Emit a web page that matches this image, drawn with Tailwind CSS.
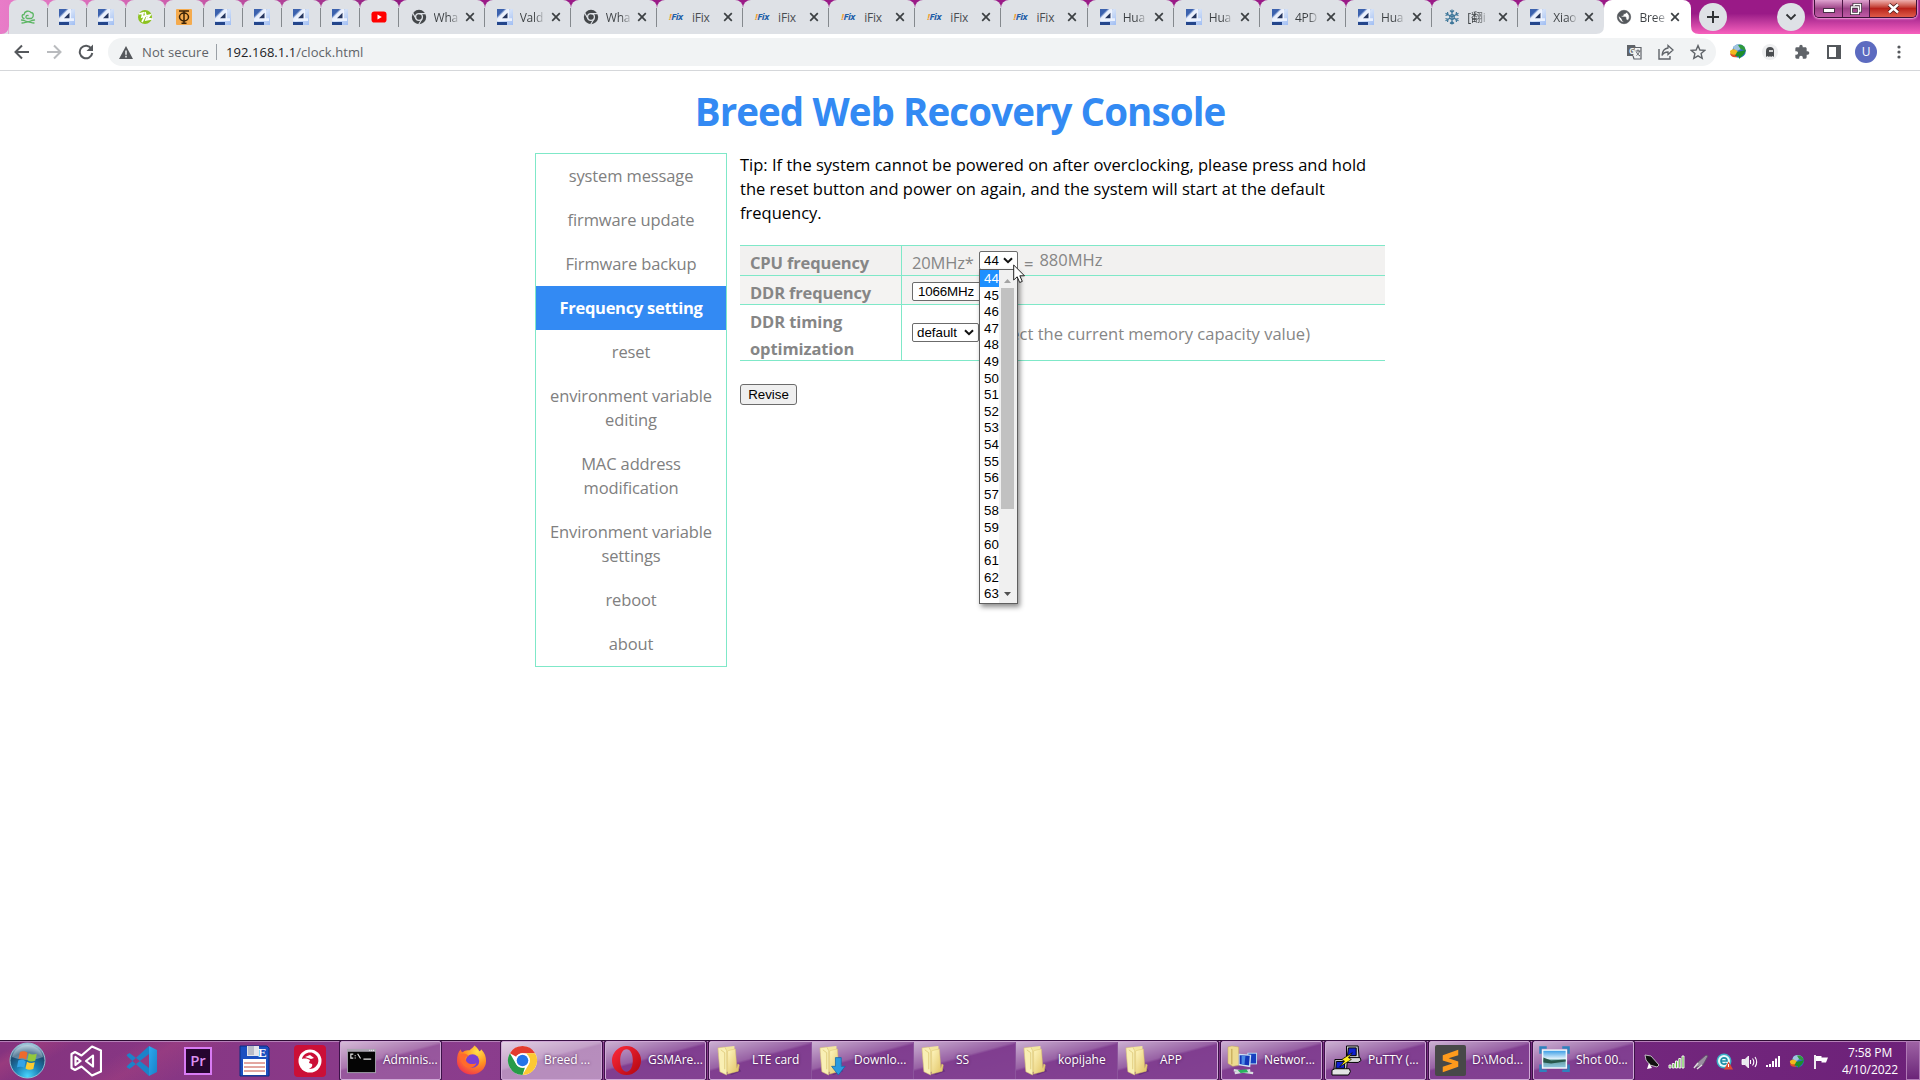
<!DOCTYPE html>
<html lang="en">
<head>
<meta charset="utf-8">
<title>Breed Web Recovery Console</title>
<script src="https://cdn.jsdelivr.net/npm/@tailwindcss/browser@4"></script>
</head>
<body class="w-[1920px] h-[1080px] overflow-hidden bg-white flex flex-col font-['Open_Sans','Noto_Sans','Noto_Sans_CJK_SC',sans-serif]">

<svg width="0" height="0" class="absolute">
  <defs>
    <linearGradient id="g4" x1="0" y1="0" x2="1" y2="1"><stop offset="0" stop-color="#2f55a4"/><stop offset=".45" stop-color="#d5e2f8"/><stop offset="1" stop-color="#9fbdf3"/></linearGradient>
    <linearGradient id="gFolder" x1="0" y1="0" x2="1" y2="1"><stop offset="0" stop-color="#fff6c0"/><stop offset="1" stop-color="#dfc05e"/></linearGradient>
    <linearGradient id="gCode" x1="0" y1="0" x2="1" y2="1"><stop offset="0" stop-color="#2ba9f0"/><stop offset="1" stop-color="#1b80c8"/></linearGradient>
    <radialGradient id="gOrb" cx=".5" cy=".95" r=".9"><stop offset="0" stop-color="#48d6ff"/><stop offset=".4" stop-color="#1c7fb4"/><stop offset=".75" stop-color="#1b4a70"/><stop offset="1" stop-color="#9fc4d8"/></radialGradient>
    <radialGradient id="gFox" cx=".7" cy=".2" r=".9"><stop offset="0" stop-color="#ffe14a"/><stop offset=".5" stop-color="#ff9020"/><stop offset="1" stop-color="#f0304f"/></radialGradient>
    <linearGradient id="gOpera" x1="0" y1="0" x2="1" y2="1"><stop offset="0" stop-color="#ff2a3c"/><stop offset="1" stop-color="#b0060f"/></linearGradient>
    <linearGradient id="gSky" x1="0" y1="0" x2="0" y2="1"><stop offset="0" stop-color="#3f9fe6"/><stop offset=".5" stop-color="#e6f4fb"/><stop offset=".55" stop-color="#5f9a9a"/><stop offset="1" stop-color="#8cc4dd"/></linearGradient>
  </defs>
  <symbol id="i-4" viewBox="0 0 16 16"><rect width="16" height="16" fill="url(#g4)"/><path d="M0 0h8L0 8z" fill="#3c62ae"/><path d="M0 9.500L9.500 0H12v9.200h3V12H0z" fill="#f3f7ff" opacity=".85"/><path d="M10.500 3.800v5.400H5z" fill="#26365f"/><path d="M0 13h10v3H0z" fill="#24468c"/></symbol>
  <symbol id="i-cloud" viewBox="0 0 16 16"><g fill="none" stroke="#5cb664" stroke-width="1.300" stroke-linecap="round"><path d="M4 9.500C1.500 9 1.500 5.500 4 5.500 4.500 2 9 1 11 3.500c2.500 0 3.500 4 .5 6H7C5 8.500 6 6 8 6.500M1.500 11c3 0 4.500 1.700 6.500 1.700s3.500-1.700 6.500-1.700M2 14c2.500 0 4-1.200 6-1.200s3.500 1.200 6 1.200"/></g></symbol>
  <symbol id="i-green" viewBox="0 0 16 16"><circle cx="8" cy="8" r="7" fill="#8cc21e"/><path d="M2 5l4-1-1 4 3-1-3 6M8 3l1 4 4-1-2 3 3 1-5 1 1-3" fill="none" stroke="#fff" stroke-width="1.700"/></symbol>
  <symbol id="i-phi" viewBox="0 0 16 16"><rect width="16" height="16" rx="1" fill="#f5ab4e"/><g fill="none" stroke="#3c2408" stroke-width="1.500"><path d="M3 2h10M8 2v12.500M5.500 14.200h5"/><ellipse cx="8" cy="8" rx="4.500" ry="3.900"/></g></symbol>
  <symbol id="i-yt" viewBox="0 0 16 16"><rect x=".5" y="2.500" width="15" height="11" rx="2.800" fill="#f00"/><path d="M6.500 5.500v5L10.800 8z" fill="#fff"/></symbol>
  <symbol id="i-chromegray" viewBox="0 0 16 16"><circle cx="8" cy="8" r="7.200" fill="#44474a"/><circle cx="8" cy="8" r="3.400" fill="none" stroke="#dee1e6" stroke-width="1.300"/><path d="M8 4.600h7M5 9.700L1.600 3.800M11 9.700l-3.500 6" stroke="#dee1e6" stroke-width="1.200"/></symbol>
  <symbol id="i-snow" viewBox="0 0 16 16"><g fill="none" stroke="#3d7699" stroke-width="1.200"><path d="M8 .5v15M1.500 4.200l13 7.600M1.500 11.800l13-7.600M6 1.500l2 2 2-2M6 14.500l2-2 2 2M1.500 6.500L4 5.700 3.500 3M14.500 9.500l-2.500.8.500 2.700M1.500 9.500l2.500.8L3.500 13M14.500 6.500L12 5.700l.5-2.700"/><circle cx="8" cy="8" r="2.300"/></g></symbol>
  <symbol id="i-globe" viewBox="0 0 24 24"><path d="M12 2C6.500 2 2 6.500 2 12s4.500 10 10 10 10-4.500 10-10S17.500 2 12 2zm-1 17.900C7.100 19.400 4 16.100 4 12c0-.6.100-1.200.200-1.800L9 15v1c0 1.100.9 2 2 2v1.900zm6.900-2.500c-.3-.8-1-1.400-1.900-1.400h-1v-3c0-.6-.4-1-1-1H8v-2h2c.6 0 1-.4 1-1V7h2c1.100 0 2-.9 2-2v-.4c2.900 1.200 5 4.100 5 7.400 0 2.100-.8 4-2.100 5.400z" fill="#54585c" stroke="#54585c"/></symbol>
  <symbol id="i-x" viewBox="0 0 10 10"><path d="M1.200 1.200l7.600 7.600M8.800 1.200L1.200 8.800" stroke="#3c4043" stroke-width="1.700" fill="none"/></symbol>
  <symbol id="i-folder" viewBox="0 0 32 32"><path d="M11 28l12-5 3 4-10 4z" fill="#3c1458" opacity=".35"/><path d="M9 2l10-1 1 25-11 2z" fill="#f3e6a0"/><path d="M12 6l8-2 1.500 20 1-4.500 1.500 1-1 6.500-11 3z" fill="url(#gFolder)" stroke="#d9c06c" stroke-width=".5"/><path d="M2 3l7-1 2 4v25l-7-3.500z" fill="#f9efb4" stroke="#d8c377" stroke-width=".6"/><path d="M5 5l4 3v17" fill="none" stroke="#d0b860" stroke-width=".6"/></symbol>
  <symbol id="i-dlfolder" viewBox="0 0 32 32"><use href="#i-folder" width="32" height="32"/><path d="M18 13h6v9h4l-7 9-7-9h4z" fill="#2a9be0" stroke="#1569a8" stroke-width=".8"/></symbol>
  <symbol id="i-cmd" viewBox="0 0 32 32"><rect x="1" y="4" width="30" height="25" fill="#a9a4b0"/><rect x="2" y="7" width="28" height="21" fill="#050505"/><path d="M24 5.500h5" stroke="#fff" stroke-dasharray="1 1"/><path d="M7.500 9.500H5v4h2.500M9.500 10.500v1M9.500 13v1M12 9l3 5M18 14.500h8" stroke="#e8e8e8" stroke-width="1.200" fill="none"/></symbol>
  <symbol id="i-chrome" viewBox="0 0 32 32"><circle cx="16" cy="16" r="15" fill="#fff"/><path d="M16 1a15 15 0 0 1 13 7.500H16a7.500 7.500 0 0 0-6.500 3.700L3 8.500A15 15 0 0 1 16 1z" fill="#e33b2e"/><path d="M29 8.500a15 15 0 0 1-13 22.500l6.500-11.200a7.500 7.500 0 0 0 0-7.500L20 8.500z" fill="#fcc934"/><path d="M3 8.500l6.500 11.300a7.500 7.500 0 0 0 9 3.300L16 31A15 15 0 0 1 3 8.500z" fill="#279b48"/><circle cx="16" cy="16" r="7.500" fill="#fff"/><circle cx="16" cy="16" r="6" fill="#2474e8"/></symbol>
  <symbol id="i-opera" viewBox="0 0 32 32"><path fill-rule="evenodd" d="M16 1a15 15 0 1 0 0 30 15 15 0 0 0 0-30zm0 3.500c4 0 6.500 5 6.500 11.500S20 27.500 16 27.500 9.500 22.500 9.500 16 12 4.500 16 4.500z" fill="url(#gOpera)"/></symbol>
  <symbol id="i-net" viewBox="0 0 32 32"><path d="M1 2l4-1 7 1v19l-6 1-5-3z" fill="#eddb91" stroke="#c7ab5a" stroke-width=".5"/><path d="M5 4v16" stroke="#b99b48"/><path d="M21 8h10v12H21z" fill="#b9d9f2"/><path d="M22 9h8v10h-8z" fill="#1640c0"/><path d="M12 9l13 1-1 13-12-2z" fill="#cfe4f5"/><path d="M13 10.500l10.500.7-.8 10L13 19.500z" fill="#1236b8"/><path d="M15 11l4 .3-1 8.800-3-.6z" fill="#4b8ae6"/><path d="M7 26l20 3M8 29l16-3" stroke="#d7dde0" stroke-width="2.500"/><path d="M11 26l9-1 2 3-8 1z" fill="#29b45f"/></symbol>
  <symbol id="i-putty" viewBox="0 0 32 32"><g stroke="#000" stroke-width="1"><path d="M16 1h12l1 12-2 3H14l2-4z" fill="#cfcfcf"/><path d="M18 3h8v8h-9z" fill="#1020d0"/><path d="M14 13h16l1 3-3 2H14z" fill="#d9d9d9"/><path d="M4 15h13l-1 11H3z" fill="#cfcfcf"/><path d="M5.500 17H14v7H5z" fill="#1020d0"/><path d="M1 26l3-1.500h15l1 3-2 3.500H1z" fill="#e4e4e4"/><path d="M22 8L11 15l3 1.500-5 6L21 15l-3-2z" fill="#ffee20" stroke-width=".7"/></g></symbol>
  <symbol id="i-subl" viewBox="0 0 32 32"><rect x="0" y="0" width="32" height="32" rx="2" fill="#484848"/><path d="M24 5L8 10.500v5.500l10 3L8 22.500V28l16-5.500V17l-10-3.300L24 10.500z" fill="#ff9a1c"/></symbol>
  <symbol id="i-shot" viewBox="0 0 32 32"><path d="M1.500 9V2.500H8M24 2.500h6.500V9M30.500 20v6.500H24M8 26.500H1.500V20" fill="none" stroke="#2e82bd" stroke-width="2.500"/><rect x="3" y="4.500" width="26" height="20" fill="#f1f8fb"/><rect x="4.500" y="6" width="23" height="17" fill="url(#gSky)"/><path d="M4.500 13l8 3 15-1v2l-15 2-8-1z" fill="#28574b"/></symbol>
  <symbol id="i-idm" viewBox="0 0 18 18"><circle cx="10" cy="8" r="6.800" fill="#2c6fc4"/><path d="M4 5c2-5 9-5 12 0-2 2-4 0-6 2-2 1.500-4 1-6-2z" fill="#9fc4e0"/><path d="M9 2c4-1 7 1 7.500 5-2 1-3-1-5-1z" fill="#2f9a3c"/><path d="M1 8c3-3 6-2 8 1l-1 3C4 14 1 12 1 8z" fill="#f0b81e"/><path d="M1 10c2 2 4 2 7 1v3c-4 1-7-1-7-4z" fill="#e2502a"/><path d="M8 9l9-2-2 4-5 5v-2.500L6 13z" fill="#1c8f2a"/></symbol>
</svg>

<!-- Tab strip -->
<header class="relative h-[34px] shrink-0 flex bg-linear-to-b from-[#9a1a87] from-40% to-[#f860bd]">
  <div class="absolute inset-y-0 left-0 w-[400px] bg-linear-to-r from-[#e87cc8] via-[#c858a8] to-[#901a80]"></div>
  <svg class="absolute left-0 top-0" width="1920" height="34"><path d="M1 34Q8.500 34 8.500 26v8z" fill="#dee1e6"/></svg>
  <div id="tabs" class="relative flex pl-[8.500px]"></div>
  <div class="relative z-10 ml-[8px] mt-[3px] size-7 rounded-full bg-[#dee1e6] flex items-center justify-center"><svg width="14" height="14"><path d="M7 1v12M1 7h12" stroke="#303336" stroke-width="2"/></svg></div>
  <div class="relative ml-[50px] mt-[3px] size-7 rounded-full bg-[#dee1e6] flex items-center justify-center"><svg width="12" height="8"><path d="M1.500 1.500L6 6l4.500-4.500" stroke="#303336" stroke-width="1.800" fill="none"/></svg></div>
  <div class="absolute left-[1814px] top-0 w-[103px] h-[18px] flex rounded-b-[5px] border border-t-0 border-[#3d1238] shadow-[0_0_2px_1px_#f5a8dc] overflow-hidden">
    <div class="w-[28px] border-r border-[#4b1644] bg-linear-to-b from-[#dfa3d0] via-[#9d4288] to-[#c05aa6] flex justify-center items-end pb-[4px]"><div class="w-[12px] h-[5px] bg-white border border-[#4a3048]"></div></div>
    <div class="w-[27px] border-r border-[#4b1644] bg-linear-to-b from-[#dfa3d0] via-[#9d4288] to-[#c05aa6] flex justify-center items-center"><svg width="12" height="12"><g fill="none" stroke="#3b2838" stroke-width="3"><path d="M4 1.500h6.500V8H8.500V4H4z"/><path d="M1.500 4h7v6.500h-7z"/></g><g fill="none" stroke="#fff" stroke-width="1.400"><path d="M4 3V1.500h6.500V8H9M1.500 4h7v6.500h-7z"/></g></svg></div>
    <div class="flex-1 bg-linear-to-b from-[#eeb0b0] via-[#b9221a] to-[#df5a48] flex justify-center items-center"><svg width="13" height="11"><path d="M2 1.500l9 8M11 1.500l-9 8" stroke="#4a1a1a" stroke-width="4"/><path d="M2 1.500l9 8M11 1.500l-9 8" stroke="#fff" stroke-width="2.500"/></svg></div>
  </div>
</header>

<!-- Toolbar -->
<nav class="h-[37px] shrink-0 border-b border-[#d5d7da] flex items-center">
  <div class="flex w-[108px] pl-[14px] gap-[16px]">
    <svg width="16" height="16"><path d="M15 8H2M8 1.500L1.500 8 8 14.500" fill="none" stroke="#55585c" stroke-width="2"/></svg>
    <svg width="16" height="16" class="ml-0"><path d="M1 8h13M8 1.500L14.500 8 8 14.500" fill="none" stroke="#b9bbbe" stroke-width="2"/></svg>
    <svg width="16" height="16"><path d="M13.300 4.500A6.300 6.300 0 1 0 14.300 9" fill="none" stroke="#55585c" stroke-width="2"/><path d="M15 .5v6.500H8.500z" fill="#55585c"/></svg>
  </div>
  <div class="w-[1608px] h-7 rounded-full bg-[#f1f3f4] flex items-center pl-[11px] text-[13px]">
    <svg width="14" height="13"><path d="M7 0l7 13H0z" fill="#55585c"/><path d="M7 4.500v4.200M7 9.800v1.700" stroke="#f1f3f4" stroke-width="1.500"/></svg>
    <span class="ml-[9px] pt-px w-[74px] text-[#5f6368] tracking-[0.1px] whitespace-nowrap">Not secure</span>
    <span class="w-px h-4 bg-[#9aa0a6]"></span>
    <span class="ml-[9px] pt-px tracking-[0.05px] text-[#202124]">192.168.1.1<span class="text-[#5f6368]">/clock.html</span></span>
    <div class="ml-auto mr-[10px] flex items-center gap-[16px]">
      <svg width="16" height="16"><path d="M1 1h8l3.500 11H1z" fill="#5f6368"/><path d="M9 3.500h6V15H8l-1-3" fill="#f1f3f4" stroke="#5f6368" stroke-width="1.200"/><path d="M9.500 7h5M12 5.500V7M13.500 7c-.5 2-1.500 3.500-3 4.500M10.500 8c.5 1.500 2 3 3.500 4" stroke="#5f6368" fill="none"/><text x="3" y="9.500" font-size="8" font-weight="700" fill="#f1f3f4" font-family="Open Sans">G</text></svg>
      <svg width="16" height="16"><path d="M1 5v10h11v-3" fill="none" stroke="#5f6368" stroke-width="1.400"/><path d="M10 1.500l5 4.500-5 4.500V8C7 8 5.200 9 4 11.500c.3-4 2.500-7 6-7.500z" fill="none" stroke="#5f6368" stroke-width="1.300"/></svg>
      <svg width="16" height="16"><path d="M8 1.600l1.900 4.400 4.800.4-3.600 3.200 1.100 4.700L8 11.800l-4.200 2.500 1.100-4.700L1.300 6.400 6.100 6z" fill="none" stroke="#5f6368" stroke-width="1.400"/></svg>
    </div>
  </div>
  <div class="flex items-center pl-[13px]">
    <svg width="18" height="18"><use href="#i-idm"/></svg>
    <div class="ml-[15px] size-4 rounded-full bg-[#eeeff0] flex items-center justify-center"><svg width="8" height="10"><path d="M0 10V4a4 4 0 0 1 8 0v6L6.500 9 5 10 4 9l-1 1-1.500-1z" fill="#4a4d50"/><path d="M3 4h4" stroke="#fff" stroke-width="1.500"/></svg></div>
    <svg width="16" height="16" viewBox="0 0 24 24" class="ml-[16px]"><path d="M20.500 11H19V7c0-1.100-.9-2-2-2h-4V3.500a2.500 2.500 0 0 0-5 0V5H4a2 2 0 0 0-2 2v3.800h1.500a2.700 2.700 0 0 1 0 5.400H2V20c0 1.100.9 2 2 2h3.800v-1.500a2.700 2.700 0 0 1 5.400 0V22H17a2 2 0 0 0 2-2v-4h1.500a2.500 2.500 0 0 0 0-5z" fill="#5f6368"/></svg>
    <svg width="14" height="14" class="ml-[17px]"><path d="M1 1h12v12H1z" fill="none" stroke="#54585c" stroke-width="2"/><path d="M9 1h4v12H9z" fill="#54585c"/></svg>
    <div class="ml-[14px] size-[22px] rounded-full bg-[#5c6bc0] text-white text-[12px] flex items-center justify-center">U</div>
    <svg width="4" height="14" class="ml-[20px]"><g fill="#55585c"><circle cx="2" cy="2" r="1.600"/><circle cx="2" cy="7" r="1.600"/><circle cx="2" cy="12" r="1.600"/></g></svg>
  </div>
</nav>

<!-- Page -->
<main class="flex-1 relative flex flex-col items-center">
  <h1 class="mt-[10px] h-[60px] leading-[60px] text-[38.500px] font-bold text-[#338af3] whitespace-nowrap tracking-[-0.920px]">Breed Web Recovery Console</h1>
  <div class="w-[850px] mt-[12px] flex items-start gap-[13px]">
    <ul class="w-[192px] shrink-0 border border-[#7fe8c8] text-center text-[16.500px] leading-6 text-[#808080] tracking-[-0.120px]">
      <li class="py-[10px]">system message</li>
      <li class="py-[10px]">firmware update</li>
      <li class="py-[10px]">Firmware backup</li>
      <li class="py-[10px] bg-[#338af3] text-white font-bold tracking-[-0.280px]">Frequency setting</li>
      <li class="py-[10px]">reset</li>
      <li class="py-[10px]">environment variable<br>editing</li>
      <li class="py-[10px]">MAC address<br>modification</li>
      <li class="py-[10px]">Environment variable<br>settings</li>
      <li class="py-[10px]">reboot</li>
      <li class="py-[10px]">about</li>
    </ul>
    <section class="w-[645px] flex flex-col items-start">
      <p class="text-[16.500px] leading-6 text-black whitespace-nowrap">Tip: If the system cannot be powered on after overclocking, please press and hold<br>the reset button and power on again, and the system will start at the default<br>frequency.</p>
      <div class="mt-[20px] w-[645px] border-t border-[#7fe8c8] text-[16.500px] text-[#868686]">
        <div class="flex h-[30px] border-b border-[#7fe8c8] bg-[#f2f1f0]">
          <div class="w-[162px] border-r border-[#7fe8c8] pl-[10px] leading-[33px] font-bold tracking-[-0.150px]">CPU frequency</div>
          <div class="flex pl-[10px] leading-[33px]"><span class="w-[67px] tracking-[-0.150px]">20MHz*</span>
            <div class="relative w-[39px] h-[19px] mt-[5px] border border-[#6b6b6b] rounded-[2px] bg-white text-black text-[13.333px] leading-[17px] font-['Liberation_Sans',sans-serif] pl-[4px]">44<svg class="absolute right-[4px] top-[5px]" width="10" height="7"><path d="M1 1.200l4 4 4-4" fill="none" stroke="#111" stroke-width="2"/></svg></div>
            <span class="ml-[6px] leading-[35px]">=</span><span class="ml-[6px] leading-[27px]">880MHz</span>
          </div>
        </div>
        <div class="flex h-[29px] border-b border-[#7fe8c8] bg-[#f4f3f2]">
          <div class="w-[162px] border-r border-[#7fe8c8] pl-[10px] leading-[33px] font-bold tracking-[-0.150px]">DDR frequency</div>
          <div class="flex pl-[10px]"><div class="w-[80px] h-[19px] mt-[6px] border border-[#6b6b6b] rounded-[2px] bg-white text-black text-[13.333px] leading-[17px] font-['Liberation_Sans',sans-serif] tracking-[-0.150px] pl-[5px]">1066MHz</div></div>
        </div>
        <div class="flex h-[56px] border-b border-[#7fe8c8]">
          <div class="w-[162px] border-r border-[#7fe8c8] pl-[10px] pt-[3px] leading-[27px] font-bold tracking-[-0.100px]">DDR timing<br>optimization</div>
          <div class="flex pl-[10px] leading-[58px] whitespace-nowrap"><div class="relative w-[67px] h-[19px] mt-[18px] border border-[#6b6b6b] rounded-[2px] bg-white text-black text-[13.333px] leading-[17px] font-['Liberation_Sans',sans-serif] pl-[4px]">default<svg class="absolute right-[4px] top-[5px]" width="10" height="7"><path d="M1 1.200l4 4 4-4" fill="none" stroke="#111" stroke-width="2"/></svg></div>
            <span class="w-[331px] flex justify-end">(select the current memory capacity value)</span></div>
        </div>
      </div>
      <button class="mt-[23px] w-[57px] h-[21px] border border-[#6b6b6b] rounded-[3px] bg-[#efefef] text-black text-[13.333px] leading-[18px] font-['Liberation_Sans',sans-serif]">Revise</button>
    </section>
  </div>

  <!-- Open multiplier list -->
  <div class="absolute left-[979px] top-[198px] w-[39px] h-[335px] border border-[#5f5f5f] bg-white flex shadow-[2px_3px_5px_rgba(0,0,0,0.45)] font-['Liberation_Sans',sans-serif] text-[13.333px] leading-[17.600px] text-black">
    <div id="options" class="w-[20px] flex flex-col pl-[4px] -mr-px"></div>
    <div class="w-[18px] bg-[#f0f0f0] flex flex-col items-center pr-px">
      <svg width="9" height="18"><path d="M1 13h7L4.500 9z" fill="#a3a3a3"/></svg>
      <div class="w-[13px] h-[221px] bg-[#c1c1c1]"></div>
      <svg width="9" height="94"><path d="M1 83h7l-3.500 4z" fill="#505050"/></svg>
    </div>
  </div>
  <svg class="absolute left-[1013px] top-[193px]" width="13" height="20"><path d="M.7 1v15l3.500-3.200 2.500 5.700 2.600-1.100-2.500-5.600h4.700z" fill="#fff" stroke="#222" stroke-width="1"/></svg>
</main>

<!-- Taskbar -->
<footer class="relative h-10 shrink-0 border-t border-[#2d0d33] bg-linear-to-r from-[#85337f] via-[#8b3d8d] via-25% to-[#6d2179] text-white text-[12px]">
  <div class="absolute inset-0 border-t border-[#b580b8] bg-[linear-gradient(150deg,transparent_0_1%,#c04a7c55_2%,transparent_4%,transparent_7%,#c04a7c44_9%,transparent_12%)]"></div>
  <div class="relative flex h-[39px]">
    <div class="flex items-center w-[340px] pl-[9px]">
      <svg width="37" height="37" viewBox="0 0 37 37"><circle cx="18.500" cy="18.500" r="17.500" fill="url(#gOrb)" stroke="#8fc0d4" stroke-width="1"/><path d="M3 15a16 16 0 0 1 31 0c-10 4-21 4-31 0z" fill="#fff" opacity=".3"/><path d="M11 10c2-1 5-1 7.500.8l-1.400 7C14.500 16 12 16 9.500 17z" fill="#ee6a2c"/><path d="M19.800 11.200c2.500 1.500 5 1.500 8 .5l-1.600 7c-3 1-5.500 1-7.800-.5z" fill="#93c83c"/><path d="M9.200 18.500c2.500-1 5-1 7.500.7l-1.400 6.500C13 24.500 10.500 24.300 8 25.300z" fill="#35a3e6"/><path d="M18 19.800c2.500 1.500 5 1.500 7.800.5l-1.500 6.700c-2.800 1-5.300 1-7.800-.5z" fill="#fccb30"/></svg>
      <svg width="32" height="32" viewBox="0 0 32 32" class="ml-[24px]"><path d="M22 1.500l9 4v21l-9 4-10.500-9L5 25l-3.500-2V9L5 7l6.500 3.500zM5.500 12v8l5-4zM23 10.500L16 16l7 5.500z" fill="none" stroke="#fff" stroke-width="2.200" stroke-linejoin="round"/></svg>
      <svg width="32" height="32" viewBox="0 0 32 32" class="ml-[24px]"><path d="M23 1l8 4v22l-8 4z" fill="url(#gCode)"/><path d="M23 1L2 20l-1.500 2 3 2L23 9zM23 31L2 12 .5 10l3-2L23 23z" fill="#1c83c9"/></svg>
      <div class="ml-[26px] size-[28px] border-2 border-[#d97bf4] bg-[#26052f] text-[#db90f0] text-[15px] font-semibold flex items-center justify-center leading-none">Pr</div>
      <svg width="32" height="32" viewBox="0 0 32 32" class="ml-[26px]"><path d="M2 1h27l2 2v28H2z" fill="#1c4fc0" stroke="#0c2c80"/><path d="M9 1h12v10H9z" fill="#e4e4ea"/><path d="M10 1h6v9h-6z" fill="#b9bcc8"/><path d="M5 14h23v16H5z" fill="#fff"/><path d="M6 18h21M6 22h21M6 26h21" stroke="#c0392b" stroke-width=".9"/><text x="20" y="12" font-size="13" font-weight="700" font-family="Liberation Serif" fill="#fff">E</text></svg>
      <svg width="32" height="32" viewBox="0 0 32 32" class="ml-[24px]"><rect y="0" width="32" height="32" rx="4" fill="#cb0f37"/><circle cx="16" cy="16" r="11.500" fill="#fff"/><path d="M8 14c1-5 6-7.500 11-6 5 2 7 8 4 12-2 3-5 4-8 4 2-1 4-3 3-5l-3-1 1-3c-2-1-4-2-8-1z" fill="#cb0f37"/><path d="M11 12l5-2 4 3-3 1z" fill="#fff"/></svg>
    </div>
    <div id="tasks" class="flex h-[39px]"></div>
    <div class="flex items-center pl-[7px] h-[41px]">
      <svg width="16" height="16"><path d="M1 1l6 1 8 9-2 2-7-2-4-5z" fill="#111" stroke="#ddd" stroke-width=".8"/><path d="M3 15l2-6 3 5z" fill="#fff"/></svg>
      <svg width="17" height="14" class="ml-[8px]"><g fill="#5ab836" stroke="#fff" stroke-width=".9"><path d="M1 10h2v3H1zM4.300 8.500h2V13h-2zM7.500 6h2v7h-2zM10.800 3.500h2V13h-2zM14 1h2v12h-2z"/></g></svg>
      <svg width="16" height="16" class="ml-[8px]"><path d="M2 13l3-5 8-7 2 1-5 9-6 2z" fill="#9a8da0" stroke="#5c4a66" stroke-width=".8"/><path d="M1 14l4-5M4 15l5-4" stroke="#ddd" stroke-width="1.500"/></svg>
      <svg width="17" height="17" class="ml-[7px]"><circle cx="8" cy="8" r="7.500" fill="#3bb0c6"/><circle cx="8" cy="8" r="6" fill="#e8fafa"/><path d="M4.500 8h6.500c0-4-6-4-6-.3 0 4 4 4 5.500 2.500" fill="none" stroke="#1e8ea8" stroke-width="1.700"/><path d="M12.500 8.500l4.500 8H8z" fill="#e04a34"/><path d="M12.500 11v3" stroke="#fff"/></svg>
      <svg width="17" height="14" class="ml-[8px]"><path d="M1 4.500h3L7.500 1v12L4 9.500H1z" fill="#e9e9ee" stroke="#fff" stroke-width=".8"/><path d="M9.500 5v4M11.500 3.500c1.500 2 1.500 5 0 7M14 2c2 3 2 7 0 10" fill="none" stroke="#fff" stroke-width="1.100"/></svg>
      <svg width="16" height="13" class="ml-[7px]"><path d="M1 10h2v2H1zM4 9h2v3H4zM7 6h2v6H7zM10 3.500h2V12h-2zM13 1h2v11h-2z" fill="#fff"/></svg>
      <svg width="16" height="16" viewBox="0 0 18 18" class="ml-[8px]"><use href="#i-idm" width="18" height="18"/></svg>
      <svg width="16" height="15" class="ml-[8px]"><path d="M2 1v14" stroke="#fff" stroke-width="1.800"/><path d="M3 2h5.500v1.500H15L13 8.500H8.500V7H3z" fill="#fff"/></svg>
    </div>
    <div class="absolute right-[14px] top-[3px] w-[72px] h-[34px] text-center leading-[17px] text-[12px] tracking-[-0.1px] whitespace-nowrap">7:58 PM<br>4/10/2022</div>
    <div class="absolute right-0 top-0 w-[14px] h-[39px] border border-[#b07ab6] bg-linear-to-b from-[#9e62a4] to-[#6b2478]"></div>
  </div>
</footer>

<script>
const icon = (id, size) => `<svg width="${size}" height="${size}" class="shrink-0"><use href="#i-${id}" width="${size}" height="${size}"/></svg>`;
const sep = '<span class="absolute right-0 top-[8px] w-px h-[19px] bg-[#85898e]"></span>';
let html = '';
['cloud','4','4','green','phi','4','4','4','4','yt'].forEach(n => {
  html += `<div class="relative w-[39px] h-[34px] bg-[#dee1e6] rounded-t-[8px] pl-[11.500px] pt-[9px]">${icon(n,16)}${sep}</div>`;
});
const tabs = [['chromegray','Wha'],['4','Vald'],['chromegray','Wha'],['','iFix'],['','iFix'],['','iFix'],['','iFix'],['','iFix'],['4','Hua'],['4','Hua'],['4','4PD'],['4','Hua'],['snow','[翻i'],['4','Xiao'],['globe','Bree']];
tabs.forEach(([n, t], i) => {
  const active = i === tabs.length - 1;
  const fav = n ? icon(n,16) : `<span class="w-4 h-4 shrink-0 flex items-center text-[9.500px] font-bold italic text-[#1f5fa8] tracking-[-0.5px] whitespace-nowrap"><span class="text-[#f0a030]">!</span>Fix</span>`;
  const fade = n ? 'bg-linear-to-r from-[#3c4043] from-60% to-[#b9bcc0] bg-clip-text text-transparent' : 'text-[#4a4d51]';
  html += `<div class="relative w-[86.150px] h-[34px] rounded-t-[8px] pl-[12px] pt-[9px] flex items-start ${active ? 'bg-white' : 'bg-[#dee1e6]'}">${fav}
    <span class="ml-[7px] h-[18px] leading-[17px] whitespace-nowrap text-[12px] tracking-[-0.2px] ${fade}">${t}</span>
    <svg width="10" height="10" class="absolute left-[66px] top-[12px]"><use href="#i-x" width="10" height="10"/></svg>
    ${active ? '<svg class="absolute -left-[8px] bottom-0" width="8" height="8"><path d="M0 8Q8 8 8 0v8z" fill="#fff"/></svg><svg class="absolute -right-[8px] bottom-0" width="8" height="8"><path d="M8 8Q0 8 0 0v8z" fill="#fff"/></svg>' : (i < tabs.length - 2 ? sep : '')}</div>`;
});
document.getElementById('tabs').innerHTML = html;

html = '';
for (let n = 44; n < 64; n++) html += `<div class="h-[16.600px] ${n === 44 ? '-ml-[4px] pl-[4px] bg-[#1e90ff] text-white' : ''}">${n}</div>`;
document.getElementById('options').innerHTML = html;

const face = 'bg-[linear-gradient(165deg,rgba(255,255,255,0.6)_0%,rgba(255,255,255,0.2)_42%,rgba(255,255,255,0.02)_46%,rgba(255,255,255,0.04)_100%)]';
const label = t => `<span class="absolute left-[42px] top-0 leading-[36px] whitespace-nowrap [text-shadow:0_0_3px_#3a1040]">${t}</span>`;
const btn = (n, t, tint = 'bg-[#7e3a8e]') => `<div class="relative w-[101px] h-[39px] mr-[3px] rounded-[2px] border border-[#d0a8d6] shadow-[0_0_0_1px_#3c1248] pl-[5px] pt-[3px] ${face} ${tint}">${icon(n,31)}${label(t)}</div>`;
html = btn('cmd','Adminis...','bg-[#95539b]');
html += `<div class="w-[57px] pl-[12px] pt-[3px]"><svg width="31" height="32" viewBox="0 0 32 32"><path d="M19 1c3 2 4 4 5 6 1 0 2-1 2-2 4 4 5 8 5 12a15 14 0 0 1-30 0C1 12 2 8 5 5c0 2 1 3 2 3 2-2 5-2 7-2 2-2 4-3 5-5z" fill="url(#gFox)"/><circle cx="17" cy="17" r="7" fill="#7a3fd0"/><path d="M4 10c4-2 8 0 9 2-3 0-4 2-3 4 2 5 8 5 11 3-1 6-12 7-15 0-1-3-2-5-2-9z" fill="#ff6a2c"/></svg></div>`;
html += btn('chrome','Breed ...','bg-[#b58abb]') + btn('opera','GSMAre...');
html += '<div class="flex w-[509px] h-[39px] mr-[3px] rounded-[2px] border border-[#d0a8d6] shadow-[0_0_0_1px_#3c1248] bg-[#7e3a8e]">';
[['folder','LTE card'],['dlfolder','Downlo...'],['folder','SS'],['folder','kopijahe'],['folder','APP']].forEach(([n, t]) => {
  html += `<div class="relative w-[102px] shrink-0 last:w-[99px] pl-[6px] pt-[3px] border-r border-[#8c549c] last:border-0 ${face}">${icon(n,31)}${label(t)}</div>`;
});
html += '</div>' + btn('net','Networ...') + btn('putty','PuTTY (...') + btn('subl','D:\\Mod...') + btn('shot','Shot 00...');
document.getElementById('tasks').innerHTML = html;
</script>
</body>
</html>
